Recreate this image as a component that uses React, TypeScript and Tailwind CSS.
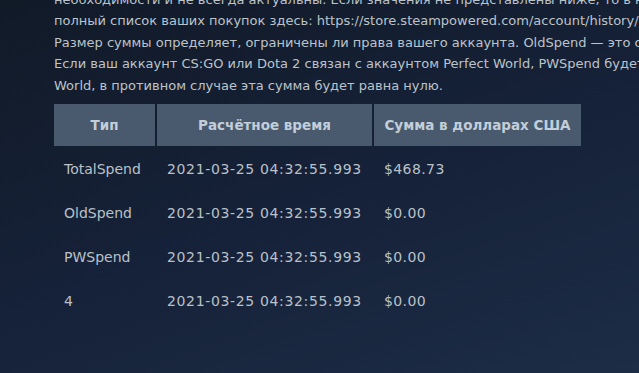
const rows = [
  { type: "TotalSpend", time: "2021-03-25 04:32:55.993", amount: "$468.73" },
  { type: "OldSpend", time: "2021-03-25 04:32:55.993", amount: "$0.00" },
  { type: "PWSpend", time: "2021-03-25 04:32:55.993", amount: "$0.00" },
  { type: "4", time: "2021-03-25 04:32:55.993", amount: "$0.00" },
];

export default function App() {
  return (
    <div
      className="h-[373px] w-[639px] overflow-hidden bg-[linear-gradient(160deg,#111a27_0%,#16223a_55%,#1c2d45_100%)] pl-[54px]"
      style={{ fontFamily: '"DejaVu Sans", sans-serif' }}
    >
      <p className="mt-[-11px] whitespace-nowrap text-[13px] leading-[21.4px] text-[#bcc3ca]">
        необходимости и не всегда актуальны. Если значения не представлены ниже, то в настоящий момент
        <br />
        полный список ваших покупок здесь: https://store.steampowered.com/account/history/
        <br />
        Размер суммы определяет, ограничены ли права вашего аккаунта. OldSpend — это общая сумма
        <br />
        Если ваш аккаунт CS:GO или Dota 2 связан с аккаунтом Perfect World, PWSpend будет суммой в Perfect
        <br />
        World, в противном случае эта сумма будет равна нулю.
      </p>
      <table className="ml-[-2px] mt-[6px] border-separate border-spacing-[2px] whitespace-nowrap">
        <thead>
          <tr className="h-[42px]">
            <th className="w-[101px] bg-[#4a5a6e] px-[10px] text-center text-[13.5px] font-bold text-[#c2ced9]">Тип</th>
            <th className="w-[215px] bg-[#4a5a6e] px-[10px] text-center text-[13.5px] font-bold text-[#c2ced9]">Расчётное время</th>
            <th className="w-[207px] bg-[#4a5a6e] px-[10px] text-center text-[13.5px] font-bold text-[#c2ced9]">Сумма в долларах США</th>
          </tr>
        </thead>
        <tbody>
          {rows.map((r) => (
            <tr key={r.type} className="h-[42px] text-[14px] font-normal text-[#b9c1c9]">
              <td className="px-[10px] text-left">{r.type}</td>
              <td className="px-[10px] text-left tracking-[0.65px]">{r.time}</td>
              <td className="px-[10px] text-left tracking-[0.4px]">{r.amount}</td>
            </tr>
          ))}
        </tbody>
      </table>
    </div>
  );
}
